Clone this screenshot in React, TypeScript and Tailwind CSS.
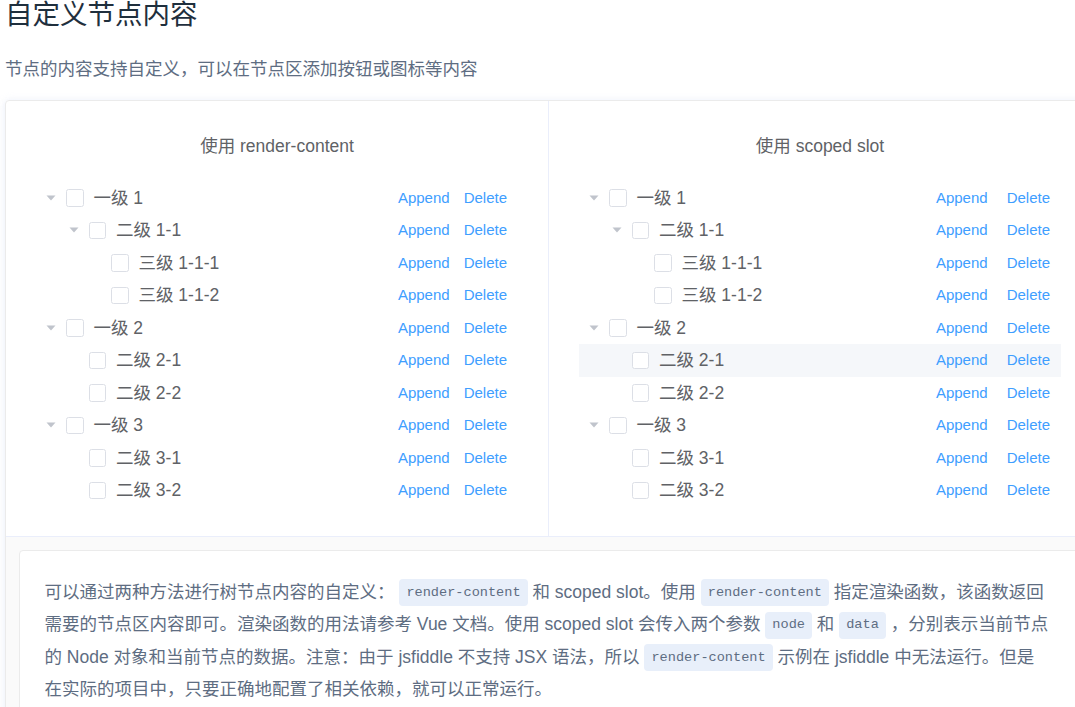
import React from "react";

type Row = { label: string; level: number; arrow: boolean };

const rows: Row[] = [
  { label: "一级 1", level: 1, arrow: true },
  { label: "二级 1-1", level: 2, arrow: true },
  { label: "三级 1-1-1", level: 3, arrow: false },
  { label: "三级 1-1-2", level: 3, arrow: false },
  { label: "一级 2", level: 1, arrow: true },
  { label: "二级 2-1", level: 2, arrow: false },
  { label: "二级 2-2", level: 2, arrow: false },
  { label: "一级 3", level: 1, arrow: true },
  { label: "二级 3-1", level: 2, arrow: false },
  { label: "二级 3-2", level: 2, arrow: false },
];

const sans = "font-['Liberation_Sans','Noto_Sans_CJK_SC',sans-serif]";

function Caret() {
  return (
    <svg width="10" height="6" viewBox="0 0 10 6">
      <path d="M0.5 0.5 L9.5 0.5 L5 5.5 Z" fill="#c0c4cc" />
    </svg>
  );
}

function Tree({ highlight, wide }: { highlight?: number; wide?: boolean }) {
  return (
    <div className="flex flex-col">
      {rows.map((r, i) => (
        <div
          key={i}
          className={`flex items-center h-[32.5px] ${i === highlight ? "bg-[#f5f7fa]" : ""}`}
          style={{ paddingLeft: (r.level - 1) * 22.5 }}
        >
          <div className="w-[30px] h-full flex items-center justify-center">
            {r.arrow ? <Caret /> : null}
          </div>
          <div className="w-[17.5px] h-[17.5px] border border-[#dcdfe6] rounded-[2.5px] bg-white mr-[10px] shrink-0" />
          <div className="flex-1 flex items-center justify-between pr-[11px]">
            <span className="text-[17.5px] text-[#606266]">{r.label}</span>
            <span className="flex items-center text-[15px] text-[#409eff]">
              <span>Append</span>
              <span className={wide ? "ml-[19px]" : "ml-[14px]"}>Delete</span>
            </span>
          </div>
        </div>
      ))}
    </div>
  );
}

function Code({ children }: { children: React.ReactNode }) {
  return (
    <span className="inline-flex items-center h-[27px] px-[7px] rounded-[4px] bg-[#e8effa] text-[#5e6d82] text-[13.6px] align-middle font-['Liberation_Mono',monospace]">
      {children}
    </span>
  );
}

export default function App() {
  return (
    <div className={`w-[1075px] h-[707px] overflow-hidden bg-white ${sans}`}>
      <div className="w-[1200px] pl-[5px]">
        <div className="h-[30px] leading-[30px] text-[27.5px] text-[#1f2f3d]">自定义节点内容</div>
        <div className="mt-[24px] h-[30px] leading-[30px] text-[17.5px] text-[#5e6d82]">
          节点的内容支持自定义，可以在节点区添加按钮或图标等内容
        </div>
        <div className="mt-[16px] w-[1087px] border border-[#ebebeb] rounded-[4px] shadow-[0_0_8px_0_rgba(232,237,250,0.6),0_2px_4px_0_rgba(232,237,250,0.5)]">
          <div className="flex">
            <div className="w-[543px] border-r border-[#eaeefb] pt-[30px] pb-[29.5px] px-[30px]">
              <div className="h-[30px] leading-[30px] text-center text-[17.5px] text-[#606266] mb-[20.5px]">使用 render-content</div>
              <Tree />
            </div>
            <div className="w-[542px] pt-[30px] pb-[29.5px] px-[30px]">
              <div className="h-[30px] leading-[30px] text-center text-[17.5px] text-[#606266] mb-[20.5px]">使用 scoped slot</div>
              <Tree highlight={5} wide />
            </div>
          </div>
          <div className="border-t border-[#eaeefb] bg-[#fafafa] p-[12.5px]">
            <div className="bg-white border border-[#ebebeb] rounded-[4px] p-[25px] text-[17.5px] leading-[32.5px] text-[#5e6d82]">
              <div className="whitespace-nowrap">
                可以通过两种方法进行树节点内容的自定义： <Code>render-content</Code> 和 scoped slot。使用 <Code>render-content</Code> 指定渲染函数，该函数返回
              </div>
              <div className="whitespace-nowrap">
                需要的节点区内容即可。渲染函数的用法请参考 Vue 文档。使用 scoped slot 会传入两个参数 <Code>node</Code> 和 <Code>data</Code> ，分别表示当前节点
              </div>
              <div className="whitespace-nowrap">
                的 Node 对象和当前节点的数据。注意：由于 jsfiddle 不支持 JSX 语法，所以 <Code>render-content</Code> 示例在 jsfiddle 中无法运行。但是
              </div>
              <div className="whitespace-nowrap">在实际的项目中，只要正确地配置了相关依赖，就可以正常运行。</div>
            </div>
          </div>
        </div>
      </div>
    </div>
  );
}
